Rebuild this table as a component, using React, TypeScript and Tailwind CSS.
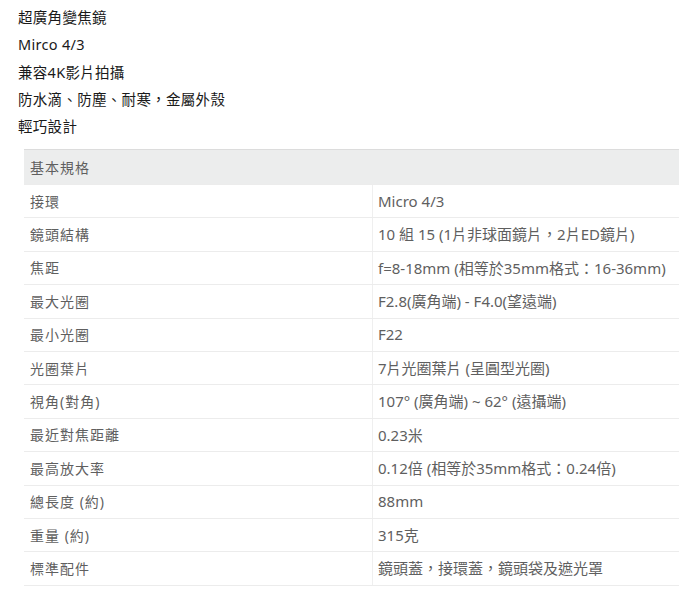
import React from "react";

const rows: [string, string][] = [
  ["接環", "Micro 4/3"],
  ["鏡頭結構", "10 組 15 (1片非球面鏡片，2片ED鏡片)"],
  ["焦距", "f=8-18mm (相等於35mm格式：16-36mm)"],
  ["最大光圈", "F2.8(廣角端) - F4.0(望遠端)"],
  ["最小光圈", "F22"],
  ["光圈葉片", "7片光圈葉片 (呈圓型光圈)"],
  ["視角(對角)", "107° (廣角端) ~ 62° (遠攝端)"],
  ["最近對焦距離", "0.23米"],
  ["最高放大率", "0.12倍 (相等於35mm格式：0.24倍)"],
  ["總長度 (約)", "88mm"],
  ["重量 (約)", "315克"],
  ["標準配件", "鏡頭蓋，接環蓋，鏡頭袋及遮光罩"],
];

const font = {
  fontFamily: '"Noto Sans", "Noto Sans CJK TC", sans-serif',
};

export default function App() {
  return (
    <div className="w-[700px] h-[597px] bg-white overflow-hidden" style={font}>
      <div className="pl-[18px] pt-[4px] text-[14.5px] leading-[27.3px] text-[#1a1a1a] tracking-[0.3px]">
        <div>超廣角變焦鏡</div>
        <div>Mirco 4/3</div>
        <div>兼容4K影片拍攝</div>
        <div>防水滴、防塵、耐寒，金屬外殼</div>
        <div>輕巧設計</div>
      </div>
      <div className="ml-[24px] mt-[9px] w-[655px] text-[14px] text-[#5f5f5f]">
        <div className="h-[34.5px] border-t border-[#dcdcdc] bg-[#eceded] flex items-center pl-[6px] tracking-[1px]">
          基本規格
        </div>
        {rows.map(([k, v]) => (
          <div key={k} className="h-[33.4px] border-t border-[#ececec] flex">
            <div className="w-[348px] flex items-center pl-[6px] tracking-[1px]">{k}</div>
            <div className="flex-1 border-l border-[#efefef] flex items-center pl-[5px] text-[15px]">{v}</div>
          </div>
        ))}
        <div className="border-t border-[#ececec]" />
      </div>
    </div>
  );
}
